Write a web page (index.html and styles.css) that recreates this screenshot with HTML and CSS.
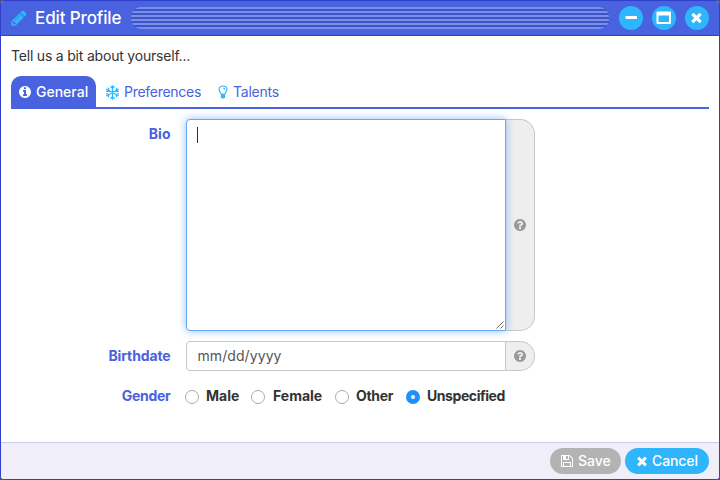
FILE: index.html
```html
<!DOCTYPE html>
<html lang="en">
<head>
<meta charset="utf-8">
<title>Edit Profile</title>
<link rel="stylesheet" href="styles.css">
</head>
<body>
<svg class="defs" width="0" height="0" aria-hidden="true">
  <symbol id="times" viewBox="0 0 1792 1792"><path d="M1490 1322q0 40-28 68l-136 136q-28 28-68 28t-68-28l-294-294-294 294q-28 28-68 28t-68-28l-136-136q-28-28-28-68t28-68l294-294-294-294q-28-28-28-68t28-68l136-136q28-28 68-28t68 28l294 294 294-294q28-28 68-28t68 28l136 136q28 28 28 68t-28 68l-294 294 294 294q28 28 28 68z"/></symbol>
  <symbol id="question" viewBox="0 0 1792 1792"><path d="M1024 1376v-192q0-14-9-23t-23-9h-192q-14 0-23 9t-9 23v192q0 14 9 23t23 9h192q14 0 23-9t9-23zm256-672q0-88-55.500-163t-138.500-116-170-41q-243 0-371 213-15 24 8 42l132 100q7 6 19 6 16 0 25-12 53-68 86-92 34-24 86-24 48 0 85.500 26t37.500 59q0 38-20 61t-68 45q-63 28-115.500 86.500t-52.500 125.500v36q0 14 9 23t23 9h192q14 0 23-9t9-23q0-19 21.500-49.500t54.500-49.500q32-18 49-28.500t46-35 44.500-48 28-60.500 12.500-81zm384 192q0 209-103 385.500t-279.500 279.500-385.500 103-385.500-103-279.500-279.500-103-385.500 103-385.500 279.500-279.500 385.500-103 385.500 103 279.500 279.500 103 385.500z"/></symbol>
</svg>
<div class="window">
  <header class="titlebar">
    <svg class="pencil" viewBox="0 0 1792 1792"><path d="M491 1536l91-91-235-235-91 91v107h128v128h107zm523-928q0-22-22-22-10 0-17 7l-542 542q-7 7-7 17 0 22 22 22 10 0 17-7l542-542q7-7 7-17zm-54-192l416 416-832 832h-416v-416zm683 96q0 53-37 90l-166 166-416-416 166-165q36-38 90-38 53 0 91 38l235 234q37 39 37 91z"/></svg>
    <h1>Edit Profile</h1>
    <div class="grip"></div>
    <div class="controls">
      <button aria-label="Minimize"><svg width="12" height="12" viewBox="0 0 12 12"><rect x=".5" y="4" width="11.500" height="3" rx=".5"/></svg></button>
      <button aria-label="Maximize"><svg width="16" height="14" viewBox="0 0 16 14"><path fill-rule="evenodd" d="M1.500 .5h12.500q1 0 1 1v10.500q0 1-1 1h-12.500q-1 0-1-1v-10.500q0-1 1-1zM2.500 4.500v6.500h10.500v-6.500z"/></svg></button>
      <button class="close" aria-label="Close"><svg width="15" height="15"><use href="#times"/></svg></button>
    </div>
  </header>
  <main>
    <p class="intro">Tell us a bit about yourself...</p>
    <nav class="tabs">
      <a class="tab active"><svg width="14" height="14" viewBox="0 0 1792 1792"><path d="M1152 1376v-160q0-14-9-23t-23-9h-96v-512q0-14-9-23t-23-9h-320q-14 0-23 9t-9 23v160q0 14 9 23t23 9h96v320h-96q-14 0-23 9t-9 23v160q0 14 9 23t23 9h448q14 0 23-9t9-23zm-128-896v-160q0-14-9-23t-23-9h-192q-14 0-23 9t-9 23v160q0 14 9 23t23 9h192q14 0 23-9t9-23zm640 416q0 209-103 385.500t-279.500 279.500-385.500 103-385.500-103-279.500-279.500-103-385.500 103-385.500 279.500-279.500 385.500-103 385.500 103 279.500 279.500 103 385.500z"/></svg><span>General</span></a>
      <a class="tab prefs"><svg class="line" width="15" height="15" viewBox="0 0 14 14"><path d="M7 .3v13.400M1.200 3.650l11.600 6.700M12.800 3.650l-11.600 6.700M5 1.200l2 2 2-2M5 12.800l2-2 2 2M1 5.900l2.700-.8-.7-2.700M13 8.100l-2.700.8.700 2.700M13 5.900l-2.700-.8.700-2.700M1 8.100l2.700.8-.7 2.700"/></svg><span>Preferences</span></a>
      <a class="tab talents"><svg class="bulb" width="10" height="14" viewBox="0 0 10 14"><path d="M3 9c0-1.500-2-2.300-2-4.400C1 2.200 2.900 1 5 1s4 1.200 4 3.600C9 6.700 7 7.500 7 9z"/><path d="M5 3q1.700 0 1.900 1.600"/><path class="base" d="M2.900 9.300h4.200v2.900l-1.100 1.300h-2l-1.100-1.300z"/></svg><span>Talents</span></a>
    </nav>
    <form class="fields">
      <label class="name bio">Bio</label>
      <div class="group tall">
        <div class="input focused"><i class="caret"></i><svg class="resize" width="8" height="8" viewBox="0 0 8 8"><path d="M.5 7.500l7-7M4.500 7.500l3-3"/></svg></div>
        <div class="addon"><svg width="14" height="14"><use href="#question"/></svg></div>
      </div>
      <label class="name birth">Birthdate</label>
      <div class="group">
        <div class="input date">mm/dd/yyyy</div>
        <div class="addon"><svg width="14" height="14"><use href="#question"/></svg></div>
      </div>
      <label class="name gender">Gender</label>
      <div class="radios">
        <label class="male"><i></i><span>Male</span></label>
        <label class="female"><i></i><span>Female</span></label>
        <label class="other"><i></i><span>Other</span></label>
        <label class="unspecified"><i class="on"></i><span>Unspecified</span></label>
      </div>
    </form>
  </main>
  <footer>
    <button class="btn save"><svg width="14" height="14" viewBox="0 0 1792 1792"><path d="M512 1536h768v-384h-768v384zm896 0h128v-896q0-14-10-38.500t-20-34.500l-281-281q-10-10-34-20t-39-10v416q0 40-28 68t-68 28h-576q-40 0-68-28t-28-68v-416h-128v1280h128v-416q0-40 28-68t68-28h832q40 0 68 28t28 68v416zm-384-928v-320q0-13-9.500-22.500t-22.500-9.500h-192q-13 0-22.500 9.500t-9.500 22.500v320q0 13 9.500 22.500t22.500 9.500h192q13 0 22.500-9.500t9.500-22.500zm640 32v928q0 40-28 68t-68 28h-1344q-40 0-68-28t-28-68v-1344q0-40 28-68t68-28h928q40 0 88 20t76 48l280 280q28 28 48 76t20 88z"/></svg><span>Save</span></button>
    <button class="btn cancel"><svg width="14" height="14"><use href="#times"/></svg><span>Cancel</span></button>
  </footer>
</div>
</body>
</html>
```
FILE: styles.css
```css
* { box-sizing: border-box; }
body { margin: 0; background: #555; font: 14px/20px Inter, "Open Sans", sans-serif; color: #333; }
svg { fill: currentColor; flex: none; display: block; }
.defs { position: absolute; }
button { border: 0; padding: 0; font: inherit; color: #fff; }
h1, p { margin: 0; }

.window { width: 720px; height: 480px; display: flex; flex-direction: column; border: 1px solid #303fcb; border-radius: 4px; background: #fff; overflow: hidden; }

.titlebar { height: 35px; flex: none; display: flex; align-items: center; padding: 0 10px 0 9px; background: #4862e0; border-bottom: 1px solid #303fcb; }
.pencil { width: 18px; height: 18px; color: #2fb5fc; }
.titlebar h1 { width: 96px; margin-left: 7px; font-size: 17px; font-weight: 500; letter-spacing: -.12px; color: #fff; white-space: nowrap; }
.grip { flex: 1; height: 22px; border-radius: 10px; background: repeating-linear-gradient(#7a8feb 0 2px, #3e53c4 2px 4px); }
.controls { display: flex; gap: 9px; margin-left: 10px; }
.controls button { width: 24px; height: 24px; border-radius: 50%; background: #2fb5fc; display: flex; align-items: center; justify-content: center; }
.controls .close { padding-bottom: 1px; padding-right: 1px; }

main { flex: 1; padding: 10px 10px 0; }
.intro { letter-spacing: -.2px; }
.tabs { display: flex; height: 33px; margin-top: 10px; border-bottom: 2px solid #4862e0; color: #4862e0; }
.tab { display: flex; align-items: center; height: 32px; }
.tab svg { color: #2fb5fc; }
.active { width: 85px; height: 33px; padding: 0 0 1px 7px; gap: 4px; border-radius: 10px 10px 0 0; background: #4862e0; color: #fff; font-weight: 500; }
.active svg { color: #fff; }
.prefs { margin-left: 9px; gap: 4px; letter-spacing: -.28px; }
.talents { margin-left: 17px; gap: 5px; letter-spacing: -.25px; }
.line { fill: none; stroke: currentColor; stroke-width: 1.1; }
.bulb { fill: none; stroke: currentColor; stroke-width: 1.1; }
.base { fill: currentColor; stroke: none; }

.fields { display: grid; grid-template-columns: 160px 349px; column-gap: 15px; row-gap: 10px; grid-template-rows: 212px 30px 30px; margin-top: 10px; }
.name { font-weight: 700; color: #4862e0; text-align: right; padding: 5px .5px 0 0; }
.birth { letter-spacing: -.13px; }
.gender { letter-spacing: -.28px; }
.group { display: flex; }
.input { width: 320px; border: 1px solid #c8c8c8; border-radius: 4px 0 0 4px; background: #fff; padding: 4px 10.5px; position: relative; color: #555; }
.focused { padding-left: 10px; border-color: #66a9f2; box-shadow: 0 0 9px rgba(75, 145, 255, .6); z-index: 1; }
.caret { display: block; width: 1px; height: 16px; margin-top: 3px; background: #333; }
.resize { position: absolute; right: 1px; bottom: 1px; fill: none; stroke: #555; stroke-width: .9; }
.date { letter-spacing: .08px; }
.addon { width: 29px; padding-right: 1px; border: 1px solid #c8c8c8; border-left: 0; border-radius: 0 15px 15px 0; background: #eee; color: #999; display: flex; align-items: center; justify-content: center; }

.radios { display: flex; align-items: center; font-weight: 700; margin-left: -1px; }
.radios label { display: flex; align-items: center; gap: 7px; white-space: nowrap; }
.radios i { width: 14px; height: 14px; flex: none; border: 1px solid #aaa; border-radius: 50%; background: #fff; margin-top: 2px; }
.radios i.on { border: 5px solid #1e8fff; }
.male { width: 66px; }
.radios .female { width: 84px; gap: 8px; }
.other { width: 71px; letter-spacing: -.3px; }
.unspecified { letter-spacing: -.43px; }

footer { height: 37px; flex: none; display: flex; justify-content: flex-end; gap: 4px; padding: 5px 10px 0; background: #f0eef8; border-top: 1px solid #cdcaea; }
.btn { height: 26px; border-radius: 13px; display: flex; align-items: center; justify-content: flex-start; gap: 4px; padding-left: 10px; font-weight: 500; }
.save { width: 71px; background: #b3b3b3; }
.cancel { width: 84px; background: #2fb5fc; letter-spacing: -.1px; }
.cancel svg { margin-right: -1px; }
```
